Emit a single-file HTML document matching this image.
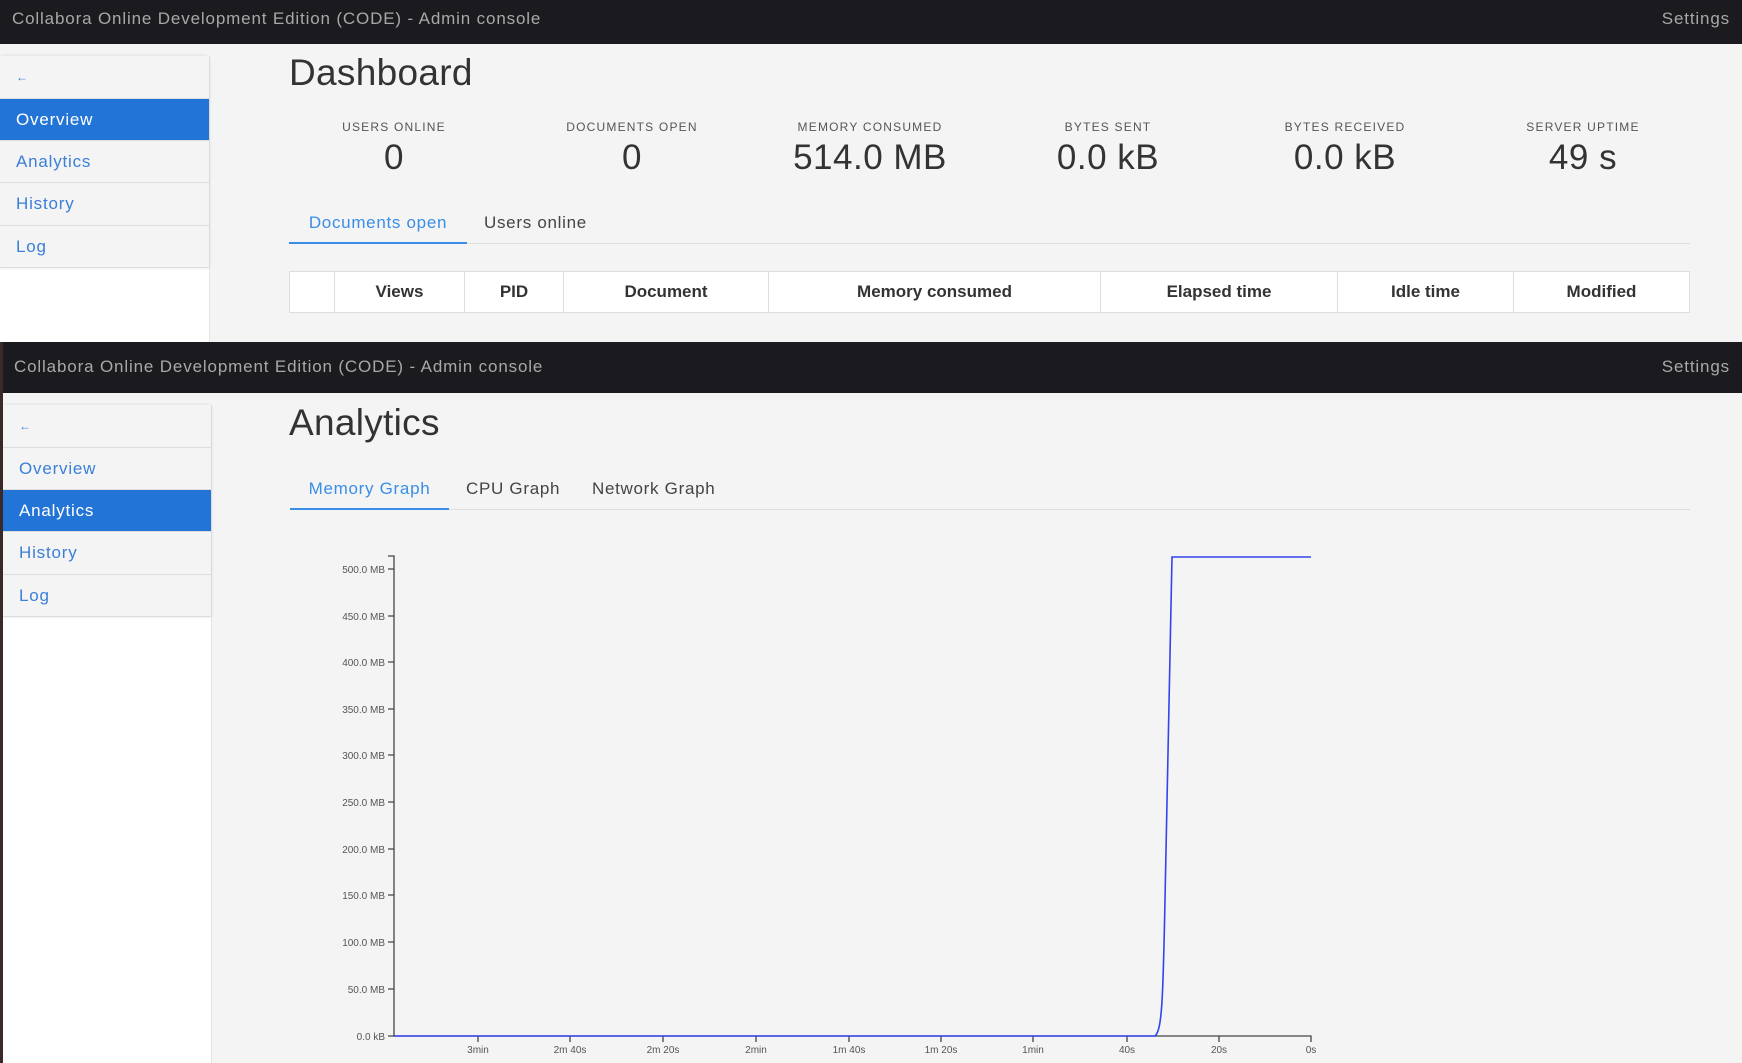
<!DOCTYPE html>
<html><head><meta charset="utf-8"><style>
*{margin:0;padding:0;box-sizing:border-box}
body{width:1742px;height:1063px;overflow:hidden;background:#f4f4f4;font-family:"Liberation Sans",sans-serif;position:relative;color:#333}
.a{position:absolute;white-space:nowrap}
.bar{position:absolute;left:0;width:1742px;background:#1b1b1f;color:#a8a8a8;font-size:17px;letter-spacing:0.85px}
.side{position:absolute;background:#fff}
.menu{position:absolute;left:0;top:0;width:100%;height:212px;background:#f4f4f4;box-shadow:0 0 3px rgba(0,0,0,0.12);border-radius:3px 3px 0 0}
.item{position:absolute;left:0;width:100%;background:#f4f4f4;border-bottom:1px solid #ddd;color:#3a7fd8;font-size:17px;letter-spacing:0.8px;padding-left:16px;display:flex;align-items:center}
.item.act{background:#2274d6;color:#fff}
.lbl{font-size:12px;letter-spacing:1.2px;color:#555;transform:translateX(-50%)}
.val{font-size:35px;color:#333;transform:translateX(-50%);letter-spacing:0.5px}
.tabs{position:absolute;border-bottom:1px solid #ddd}
.tab{font-size:17px;letter-spacing:0.7px}
.th{position:absolute;top:0;height:100%;display:flex;align-items:center;justify-content:center;font-size:17px;font-weight:bold;color:#333;border-right:1px solid #ddd}
.ax{font-size:10px;fill:#555;font-family:"Liberation Sans",sans-serif}
</style></head><body>
<div class="bar" style="top:0;height:44px"><span class="a" style="left:12px;top:9px">Collabora Online Development Edition (CODE) - Admin console</span><span class="a" style="right:12px;top:9px">Settings</span></div>
<div class="side" style="left:0;top:56px;width:210px;height:286px;border-right:1px solid #e4e4e4">
<div class="menu"></div>
<div class="item" style="top:0;height:43px;font-size:12px">←</div>
<div class="item act" style="top:43px;height:42px">Overview</div>
<div class="item" style="top:85px;height:42px">Analytics</div>
<div class="item" style="top:127px;height:43px">History</div>
<div class="item" style="top:170px;height:42px">Log</div>
</div>
<div class="a" style="left:289px;top:52px;font-size:37px;color:#333;letter-spacing:0.3px">Dashboard</div>
<div class="a lbl" style="left:394px;top:120px">USERS ONLINE</div><div class="a val" style="left:394px;top:138px">0</div>
<div class="a lbl" style="left:632px;top:120px">DOCUMENTS OPEN</div><div class="a val" style="left:632px;top:138px">0</div>
<div class="a lbl" style="left:870px;top:120px">MEMORY CONSUMED</div><div class="a val" style="left:870px;top:138px">514.0 MB</div>
<div class="a lbl" style="left:1108px;top:120px">BYTES SENT</div><div class="a val" style="left:1108px;top:138px">0.0 kB</div>
<div class="a lbl" style="left:1345px;top:120px">BYTES RECEIVED</div><div class="a val" style="left:1345px;top:138px">0.0 kB</div>
<div class="a lbl" style="left:1583px;top:120px">SERVER UPTIME</div><div class="a val" style="left:1583px;top:138px">49 s</div>
<div class="tabs" style="left:289px;top:200px;width:1401px;height:44px">
<div class="a tab" style="left:0;top:0;width:178px;height:44px;border-bottom:2px solid #3a8ee6;color:#3a8ee6;text-align:center;padding-top:13px">Documents open</div>
<div class="a tab" style="left:195px;top:13px;color:#444">Users online</div></div>
<div class="a" style="left:289px;top:271px;width:1401px;height:42px;background:#fff;border:1px solid #ddd">
<div class="th" style="left:0;width:45px"></div>
<div class="th" style="left:45px;width:130px">Views</div>
<div class="th" style="left:175px;width:99px">PID</div>
<div class="th" style="left:274px;width:205px">Document</div>
<div class="th" style="left:479px;width:332px">Memory consumed</div>
<div class="th" style="left:811px;width:237px">Elapsed time</div>
<div class="th" style="left:1048px;width:176px">Idle time</div>
<div class="th" style="left:1224px;width:175px;border-right:none">Modified</div>
</div>
<div class="a" style="left:0;top:342px;width:3px;height:721px;background:#3c2a2a"></div>
<div class="bar" style="top:342px;height:51px;left:3px"><span class="a" style="left:11px;top:15px">Collabora Online Development Edition (CODE) - Admin console</span><span class="a" style="right:15px;top:15px">Settings</span></div>
<div class="side" style="left:3px;top:405px;width:209px;height:658px;border-right:1px solid #e4e4e4">
<div class="menu"></div>
<div class="item" style="top:0;height:43px;font-size:12px">←</div>
<div class="item" style="top:43px;height:42px">Overview</div>
<div class="item act" style="top:85px;height:42px">Analytics</div>
<div class="item" style="top:127px;height:43px">History</div>
<div class="item" style="top:170px;height:42px">Log</div>
</div>
<div class="a" style="left:289px;top:402px;font-size:37px;color:#333;letter-spacing:0.3px">Analytics</div>
<div class="tabs" style="left:290px;top:466px;width:1400px;height:44px">
<div class="a tab" style="left:0;top:0;width:159px;height:44px;border-bottom:2px solid #3a8ee6;color:#3a8ee6;text-align:center;padding-top:13px">Memory Graph</div>
<div class="a tab" style="left:176px;top:13px;color:#444">CPU Graph</div>
<div class="a tab" style="left:302px;top:13px;color:#444">Network Graph</div></div>
<svg class="a" style="left:0;top:0" width="1742" height="1063">
<g stroke="#444" stroke-width="1.3" fill="none">
<path d="M388 556H394V1036H1311V1042"/>
<path d="M388 569h6M388 616h6M388 662h6M388 709h6M388 755h6M388 802h6M388 849h6M388 895h6M388 942h6M388 989h6M388 1036h6"/>
<path d="M478 1036v6M570 1036v6M663 1036v6M756 1036v6M849 1036v6M941 1036v6M1033 1036v6M1127 1036v6M1219 1036v6"/>
</g>
<g class="ax" text-anchor="end">
<text x="385" y="573">500.0 MB</text><text x="385" y="620">450.0 MB</text><text x="385" y="666">400.0 MB</text><text x="385" y="713">350.0 MB</text><text x="385" y="759">300.0 MB</text><text x="385" y="806">250.0 MB</text><text x="385" y="853">200.0 MB</text><text x="385" y="899">150.0 MB</text><text x="385" y="946">100.0 MB</text><text x="385" y="993">50.0 MB</text><text x="385" y="1040">0.0 kB</text>
</g>
<g class="ax" text-anchor="middle">
<text x="478" y="1053">3min</text><text x="570" y="1053">2m 40s</text><text x="663" y="1053">2m 20s</text><text x="756" y="1053">2min</text><text x="849" y="1053">1m 40s</text><text x="941" y="1053">1m 20s</text><text x="1033" y="1053">1min</text><text x="1127" y="1053">40s</text><text x="1219" y="1053">20s</text><text x="1311" y="1053">0s</text>
</g>
<path d="M394 1036H1155C1162 1030 1163 1000 1165 900L1172 557H1311" stroke="#3344ee" stroke-width="1.6" fill="none"/>
</svg>
</body></html>
